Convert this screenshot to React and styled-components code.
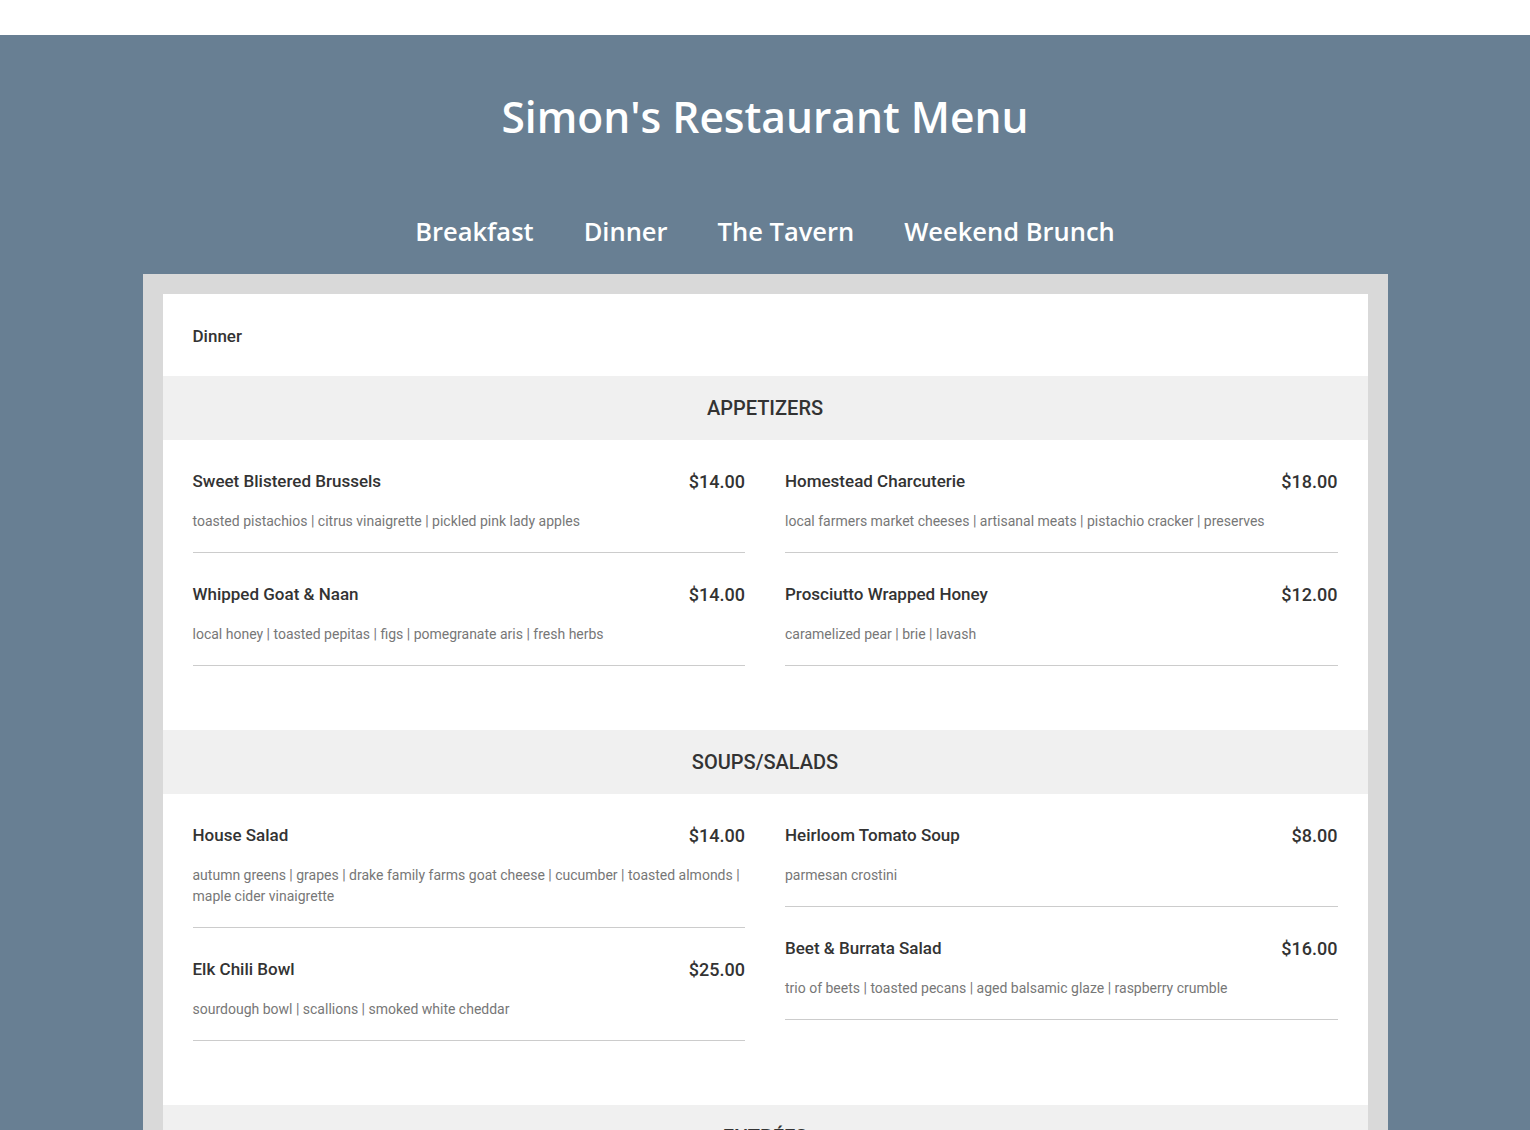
import React from "react";
import styled, { createGlobalStyle } from "styled-components";

const GlobalStyle = createGlobalStyle`
  body {
    margin: 0;
    background: #ffffff;
    font-family: Roboto, "Liberation Sans", sans-serif;
  }
`;

const Page = styled.div`
  margin-top: 35px;
  background: #687f93;
  min-height: 1095px;
  padding-bottom: 60px;
`;

const Header = styled.header`
  display: flex;
  flex-direction: column;
  align-items: center;
  padding-top: 57px;
`;

const Title = styled.h1`
  margin: 0;
  color: #ffffff;
  font-family: "Open Sans", "Liberation Sans", sans-serif;
  font-weight: 600;
  font-size: 42.5px;
  line-height: 50px;
`;

const Nav = styled.nav`
  display: flex;
  gap: 50px;
  margin-top: 73px;
`;

const Tab = styled.a`
  color: #ffffff;
  font-family: "Open Sans", "Liberation Sans", sans-serif;
  font-weight: 600;
  font-size: 25.5px;
  line-height: 32px;
  text-decoration: none;
  cursor: pointer;
`;

const Panel = styled.main`
  width: 1205px;
  margin: 27px auto 0;
  border: 20px solid #d9d9d9;
  background: #ffffff;
`;

const MenuLabel = styled.div`
  padding: 31px 30px 29px;
  font-size: 17px;
  line-height: 22px;
  font-weight: 500;
  color: #333333;
`;

const SectionTitle = styled.h2`
  margin: 0;
  background: #f0f0f0;
  height: 64px;
  display: flex;
  align-items: center;
  justify-content: center;
  font-size: 20px;
  font-weight: 500;
  color: #333333;
`;

const Columns = styled.div`
  display: grid;
  grid-template-columns: 1fr 1fr;
  column-gap: 40px;
  align-items: start;
  padding: 0 30px 64px;
`;

const Column = styled.div`
  display: flex;
  flex-direction: column;
`;

const Item = styled.div`
  padding: 30px 0 20px;
  border-bottom: 1px solid #cccccc;
`;

const ItemHead = styled.div`
  display: flex;
  justify-content: space-between;
  align-items: center;
  height: 22px;
  color: #333333;
  font-weight: 500;
`;

const ItemName = styled.span`
  font-size: 17px;
`;

const Price = styled.span`
  font-size: 18px;
`;

const Desc = styled.p`
  margin: 19px 0 0;
  font-size: 14px;
  line-height: 21px;
  color: #777777;
`;

const sections = [
  {
    title: "APPETIZERS",
    columns: [
      [
        {
          name: "Sweet Blistered Brussels",
          price: "$14.00",
          desc: "toasted pistachios | citrus vinaigrette | pickled pink lady apples",
        },
        {
          name: "Whipped Goat & Naan",
          price: "$14.00",
          desc: "local honey | toasted pepitas | figs | pomegranate aris | fresh herbs",
        },
      ],
      [
        {
          name: "Homestead Charcuterie",
          price: "$18.00",
          desc: "local farmers market cheeses | artisanal meats | pistachio cracker | preserves",
        },
        {
          name: "Prosciutto Wrapped Honey",
          price: "$12.00",
          desc: "caramelized pear | brie | lavash",
        },
      ],
    ],
  },
  {
    title: "SOUPS/SALADS",
    columns: [
      [
        {
          name: "House Salad",
          price: "$14.00",
          desc: "autumn greens | grapes | drake family farms goat cheese | cucumber | toasted almonds | maple cider vinaigrette",
        },
        {
          name: "Elk Chili Bowl",
          price: "$25.00",
          desc: "sourdough bowl | scallions | smoked white cheddar",
        },
      ],
      [
        {
          name: "Heirloom Tomato Soup",
          price: "$8.00",
          desc: "parmesan crostini",
        },
        {
          name: "Beet & Burrata Salad",
          price: "$16.00",
          desc: "trio of beets | toasted pecans | aged balsamic glaze | raspberry crumble",
        },
      ],
    ],
  },
  {
    title: "ENTRÉES",
    columns: [
      [
        {
          name: "Bison Burger",
          price: "$22.00",
          desc: "aged cheddar | bacon jam | brioche bun | hand cut fries",
        },
      ],
      [
        {
          name: "Pan Seared Trout",
          price: "$28.00",
          desc: "wild rice | roasted squash | brown butter",
        },
      ],
    ],
  },
];

function App() {
  return (
    <>
      <GlobalStyle />
      <Page>
        <Header>
          <Title>Simon's Restaurant Menu</Title>
          <Nav>
            <Tab>Breakfast</Tab>
            <Tab>Dinner</Tab>
            <Tab>The Tavern</Tab>
            <Tab>Weekend Brunch</Tab>
          </Nav>
        </Header>
        <Panel>
          <MenuLabel>Dinner</MenuLabel>
          {sections.map((section) => (
            <section key={section.title}>
              <SectionTitle>{section.title}</SectionTitle>
              <Columns>
                {section.columns.map((col, i) => (
                  <Column key={i}>
                    {col.map((item) => (
                      <Item key={item.name}>
                        <ItemHead>
                          <ItemName>{item.name}</ItemName>
                          <Price>{item.price}</Price>
                        </ItemHead>
                        <Desc>{item.desc}</Desc>
                      </Item>
                    ))}
                  </Column>
                ))}
              </Columns>
            </section>
          ))}
        </Panel>
      </Page>
    </>
  );
}

export default App;
